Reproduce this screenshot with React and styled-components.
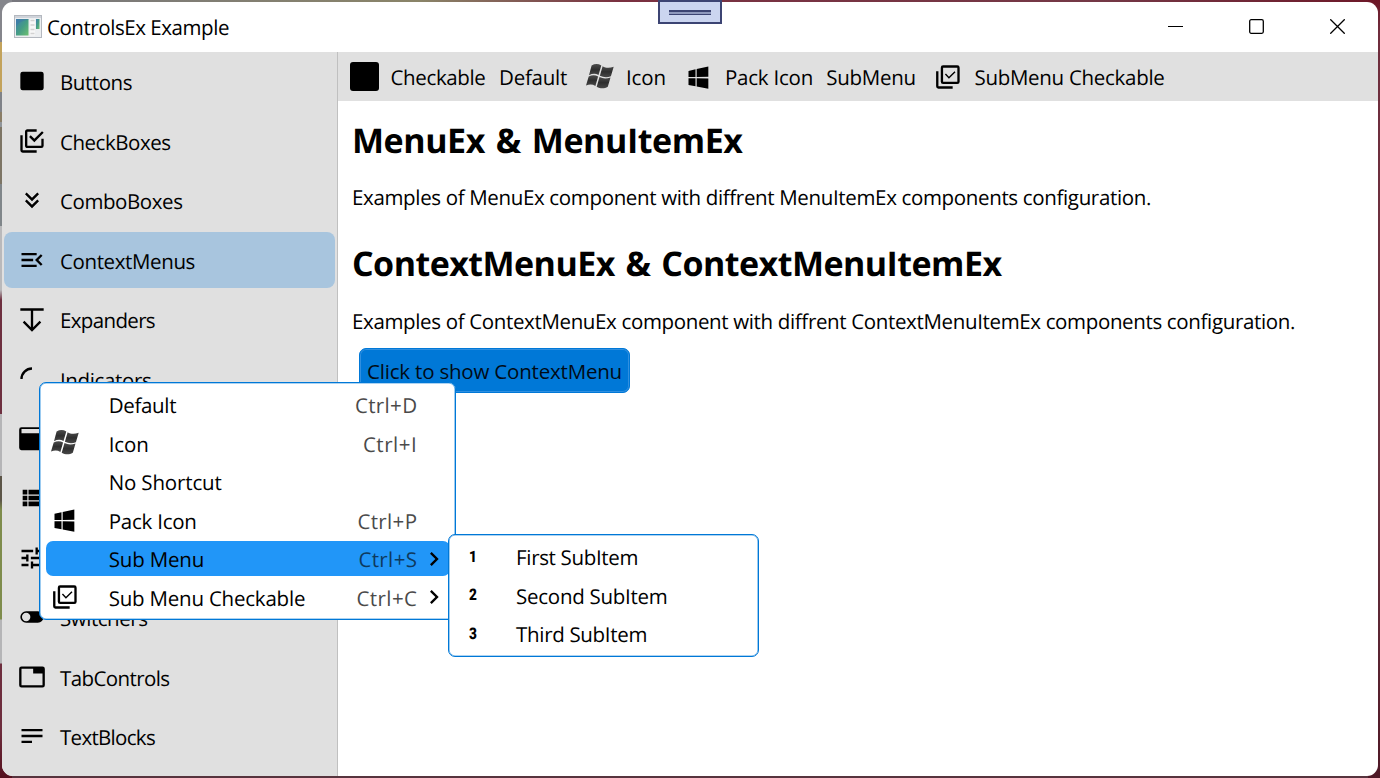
import React, { useLayoutEffect, useRef, useState } from "react";
import styled, { createGlobalStyle } from "styled-components";

const GlobalStyle = createGlobalStyle`
  * { box-sizing: border-box; }
  html, body { margin: 0; padding: 0; overflow: hidden; }
  body {
    font-family: "Open Sans", "Noto Sans", sans-serif;
    font-size: 20.5px;
    color: #000;
    text-rendering: geometricPrecision;
  }
`;

const Desktop = styled.div`
  position: relative;
  width: 1380px;
  height: 778px;
  padding: 2px;
  background:
    linear-gradient(180deg, #85868c 0 42px, #c3a35c 42px 92px, #7f8288 92px 112px, #8a7d66 112px 122px, #8f9499 122px 127px, #7d7565 127px 184px, #80868a 184px 226px, #b9b9bb 226px 290px, #6e3040 300px 414px, #b5b5b7 414px 476px, #5c5548 476px 500px, #7e8c4c 510px 619px, #b5b5b7 620px 663px, #6e2e3e 664px 730px, #55101e 100%) left / 12px 100% no-repeat,
    linear-gradient(180deg, #6d1626, #6f2c3c 30px, #6a3542 60%, #4f1826) right / 12px 100% no-repeat,
    linear-gradient(90deg, #77777f, #8a8468 420px, #7a3040 620px, #743846 1100px, #6d1828) top / 100% 12px no-repeat,
    #57343e;
`;

const Window = styled.div`
  width: 1376px;
  height: 774px;
  border-radius: 11px;
  overflow: hidden;
  background: #fff;
  display: flex;
  flex-direction: column;
`;

const TitleBar = styled.header`
  height: 50px;
  flex: none;
  display: flex;
  align-items: center;
  padding-left: 12px;
`;

const Title = styled.div`
  margin-left: 5px;
  flex: 1;
  line-height: 28px;
  padding-top: 2px;
`;

const CaptionButton = styled.button`
  width: 81px;
  height: 50px;
  border: 0;
  padding: 0 0 1px;
  background: none;
  display: grid;
  place-items: center;
`;

const Body = styled.div`
  flex: 1;
  display: flex;
  min-height: 0;
`;

const Sidebar = styled.nav`
  width: 336px;
  flex: none;
  background: #e0e0e0;
  border-right: 1px solid #c0c0c0;
  padding: 1.4px 2px 0;
  display: flex;
  flex-direction: column;
  gap: 3.55px;
`;

const NavItem = styled.a`
  height: 56px;
  flex: none;
  width: 331px;
  border-radius: 8px;
  display: flex;
  align-items: center;
  padding-left: 13.5px;
  background: ${(p) => (p.$selected ? "#a8c5de" : "transparent")};
`;

const NavLabel = styled.span`
  margin-left: 14.5px;
  padding-top: 3.4px;
  line-height: 28px;
`;

const Content = styled.main`
  flex: 1;
  min-width: 0;
`;

const MenuBar = styled.div`
  height: 49px;
  background: #e0e0e0;
  display: flex;
  align-items: center;
  padding-left: 11.5px;
`;

const Swatch = styled.span`
  width: 29px;
  height: 29px;
  border-radius: 3px;
  background: #000;
`;

const MenuBarItem = styled.span`
  display: flex;
  align-items: center;
  height: 49px;
  width: ${(p) => p.$width}px;
  flex: none;
`;

const MenuBarLabel = styled.span`
  margin-left: ${(p) => p.$gap || 0}px;
  padding-top: 2px;
  line-height: 28px;
`;

const Page = styled.section`
  padding: 15px 0 0 14px;
`;

const Heading = styled.h1`
  margin: 0;
  font-size: 34px;
  font-weight: 700;
  line-height: 48px;
  word-spacing: 2.5px;
`;

const Paragraph = styled.p`
  margin: ${(p) => p.$margin};
  line-height: 28px;
`;

const ShowButton = styled.button`
  width: 271px;
  height: 45px;
  margin-left: 7px;
  padding: 0 0 0 7px;
  display: block;
  text-align: left;
  font: inherit;
  color: #000b16;
  border: 1px solid #0078d7;
  border-radius: 7px;
  background: #0078d7;
  box-shadow: inset 0 0 0 1px #2f8fe0;
`;

const Popup = styled.div`
  position: absolute;
  left: ${(p) => p.$left}px;
  top: ${(p) => p.$top}px;
  width: ${(p) => p.$width}px;
  height: ${(p) => p.$height}px;
  background: #fff;
  border: 1px solid #0078d7;
  border-radius: 7px;
  box-shadow: inset 0 0 0 0.6px #5aa8e6;
  padding: ${(p) => p.$padding};
  display: flex;
  flex-direction: column;
  gap: 3.5px;
`;

const PopupItem = styled.div`
  height: 35px;
  flex: none;
  border-radius: 7px;
  display: flex;
  align-items: center;
  background: ${(p) => (p.$active ? "#2196f8" : "transparent")};
`;

const PopupIcon = styled.span`
  width: ${(p) => p.$width}px;
  padding-left: ${(p) => p.$inset}px;
  flex: none;
  display: flex;
  align-items: center;
`;

const PopupLabel = styled.span`
  flex: 1;
  padding-top: 2.8px;
  line-height: 28px;
`;

const Shortcut = styled.span`
  color: ${(p) => (p.$active ? "#0e3a5e" : "#4a4a4a")};
  padding-top: 2.8px;
  line-height: 28px;
`;

const Arrow = styled.span`
  width: 29.5px;
  height: 28px;
  margin-left: 3px;
  flex: none;
`;

const Digit = styled.span`
  font: 900 16px/28px Roboto, sans-serif;
  width: 28px;
  padding-top: 0.6px;
  text-align: center;
  transform: scaleX(0.85);
`;

const Grip = styled.div`
  position: absolute;
  left: 658px;
  top: 0;
  width: 64px;
  height: 24px;
  border: 2px solid #3c4473;
  background: #cbd5f0;
  display: grid;
  place-items: center;
`;

const GripLines = styled.span`
  width: 42px;
  height: 5px;
  margin-top: 1px;
  background: #8f99bd;
  border-top: 2px solid #3c4473;
  border-bottom: 1px solid #3c4473;
`;

const Run = styled.span`
  display: inline-block;
  white-space: pre;
`;

/* A run of text tracked so that its advance equals `width`. */
function Tracked({ width, children }) {
  const ref = useRef(null);
  const [spacing, setSpacing] = useState(0);
  useLayoutEffect(() => {
    const natural = ref.current.getBoundingClientRect().width;
    setSpacing((width - natural) / children.length);
  }, []);
  return (
    <Run ref={ref} style={{ letterSpacing: `${spacing}px` }}>
      {children}
    </Run>
  );
}

const paths = {
  button: "M4,4H20A2,2 0 0,1 22,6V18A2,2 0 0,1 20,20H4A2,2 0 0,1 2,18V6A2,2 0 0,1 4,4Z",
  checks: "M20,16V10H22V16A2,2 0 0,1 20,18H8C6.89,18 6,17.1 6,16V4C6,2.89 6.89,2 8,2H16V4H8V16H20M10.91,7.08L14,10.17L20.59,3.58L22,5L14,13L9.5,8.5L10.91,7.08M16,20V22H4A2,2 0 0,1 2,20V7H4V20H16Z",
  combo: "M16.59,5.59L18,7L12,13L6,7L7.41,5.59L12,10.17L16.59,5.59M16.59,11.59L18,13L12,19L6,13L7.41,11.59L12,16.17L16.59,11.59Z",
  menuOpen: "M21,15.61L19.59,17L14.58,12L19.59,7L21,8.39L17.44,12L21,15.61M3,6H16V8H3V6M3,13V11H13V13H3M3,18V16H16V18H3Z",
  expand: "M22,4V2H2V4H11V18.17L5.5,12.67L4.08,14.08L12,22L19.92,14.08L18.5,12.67L13,18.17V4H22Z",
  loading: "M12,4V2A10,10 0 0,0 2,12H4A8,8 0 0,1 12,4Z",
  window: "M3,2H21A2,2 0 0,1 23,4V19.6A2,2 0 0,1 21,21.6H3A2,2 0 0,1 1,19.6V4A2,2 0 0,1 3,2M3,3.4V7H21V3.4Z",
  list: "M9,5V9H21V5M9,19H21V15H9M9,14H21V10H9M4,9H8V5H4M4,19H8V15H4M4,14H8V10H4V14Z",
  tune: "M3,17V19H9V17H3M3,5V7H13V5H3M13,21V19H21V17H13V15H11V21H13M7,9V11H3V13H7V15H9V9H7M21,13V11H11V13H21M15,9H17V7H21V5H17V3H15V9Z",
  toggle: "M17,7H7A5,5 0 0,0 2,12A5,5 0 0,0 7,17H17A5,5 0 0,0 22,12A5,5 0 0,0 17,7M7,15.6A3.6,3.6 0 0,1 3.4,12A3.6,3.6 0 0,1 7,8.4A3.6,3.6 0 0,1 10.6,12A3.6,3.6 0 0,1 7,15.6Z",
  tab: "M21,3H3A2,2 0 0,0 1,5V19A2,2 0 0,0 3,21H21A2,2 0 0,0 23,19V5A2,2 0 0,0 21,3M21,19H3V5H13V9H21V19Z",
  text: "M21,6V8H3V6H21M3,18H12V16H3V18M3,13H21V11H3V13Z",
  windows: "M3,12V6.75L9,5.43V11.91L3,12M20,3V11.75L10,11.9V5.21L20,3M3,13L9,13.09V19.9L3,18.75V13M20,13.25V22L10,20.09V13.1L20,13.25Z",
  chevron: "M8.59,16.58L13.17,12L8.59,7.41L10,6L16,12L10,18L8.59,16.58Z",
};

const IconSvg = styled.svg`
  width: 28px;
  height: 28px;
  flex: none;
  display: block;
`;

const Icon = ({ name }) => (
  <IconSvg viewBox="0 0 24 24">
    <path d={paths[name]} fillRule="evenodd" />
  </IconSvg>
);

const CheckStack = () => (
  <IconSvg viewBox="0 0 24 24" fill="none" stroke="#000">
    <rect x="6.8" y="3" width="14.2" height="14" rx="1" strokeWidth="2" />
    <path d="M2.8,7V20A1,1 0 0,0 3.8,21H16" strokeWidth="2" />
    <path d="M9.8,9.4L12.8,12.6L18,7.4" strokeWidth="1.2" />
  </IconSvg>
);

const Flag = () => (
  <IconSvg viewBox="0 0 28 28">
    <defs>
      <linearGradient id="flag" x1="0" y1="0" x2="0" y2="1">
        <stop offset="0" stopColor="#4c4c4c" />
        <stop offset="0.5" stopColor="#2e2e2e" />
        <stop offset="1" stopColor="#484848" />
      </linearGradient>
    </defs>
    <g fill="url(#flag)" transform="translate(0.4 -0.9)">
      <path d="M5.2,3.4C8.4,1.5 11.8,1.4 14.9,3.4L12.1,13C9,11.2 6,11.4 2.6,13.2Z" />
      <path d="M16.2,4.2C19.6,6.2 23.4,6 27.3,4.7L24.5,14.2C21,15.6 17,15.4 13.5,13.7Z" />
      <path d="M2.3,14.4C5.6,12.7 8.8,12.7 11.7,14.4L9,23.8C6,22 3,22 -0.4,23.5Z" />
      <path d="M13.1,15C16.6,16.8 20.2,16.8 24.1,15.4L21.4,24.6C17.8,26.8 13.9,26.6 10.3,24.6Z" />
    </g>
  </IconSvg>
);

const AppIcon = () => (
  <svg width="28" height="24" viewBox="0 0 28 24">
    <defs>
      <linearGradient id="app" x1="0" y1="0" x2="1" y2="1">
        <stop offset="0" stopColor="#3f7fae" />
        <stop offset="0.5" stopColor="#459c86" />
        <stop offset="1" stopColor="#6cc070" />
      </linearGradient>
    </defs>
    <g transform="translate(0 -1)">
      <rect x="0.5" y="1.5" width="27" height="22" fill="#eceef0" stroke="#b4b8bf" />
      <rect x="1" y="2" width="26" height="2" fill="#cfd3da" />
      <rect x="2" y="5" width="12.5" height="16.5" fill="url(#app)" />
      <path d="M2,12.5C5,8 9,6.5 14.5,5.5V5H2Z" fill="#3b73a8" opacity="0.45" />
      <rect x="16" y="5" width="5" height="16.5" fill="#f7f7f7" />
      <path d="M16.5,6.5H20.5M16.5,11H20.5M16.5,15.5H20.5M16.5,19.5H20.5" stroke="#d2d2d2" strokeWidth="1.6" />
      <rect x="22" y="5" width="3.5" height="10" fill="url(#app)" />
    </g>
  </svg>
);

const nav = [
  { icon: "button", label: "Buttons", w: 72 },
  { icon: "checks", label: "CheckBoxes", w: 110.5 },
  { icon: "combo", label: "ComboBoxes", w: 122.5 },
  { icon: "menuOpen", label: "ContextMenus", w: 135, selected: true },
  { icon: "expand", label: "Expanders", w: 95 },
  { icon: "loading", label: "Indicators", w: 91.5 },
  { icon: "window" },
  { icon: "list" },
  { icon: "tune" },
  { icon: "toggle", label: "Switchers", w: 87.5 },
  { icon: "tab", label: "TabControls", w: 109.5 },
  { icon: "text", label: "TextBlocks", w: 95 },
];

const menu = [
  { label: "Default", w: 67.5, keys: "Ctrl+D", kw: 62.5 },
  { label: "Icon", w: 40, keys: "Ctrl+I", kw: 54.5, icon: <Flag /> },
  { label: "No Shortcut", w: 113, keys: "" },
  { label: "Pack Icon", w: 88, keys: "Ctrl+P", kw: 60 },
  { label: "Sub Menu", w: 95.5, keys: "Ctrl+S", kw: 59, active: true, arrow: true },
  { label: "Sub Menu Checkable", w: 196.5, keys: "Ctrl+C", kw: 61, icon: <CheckStack />, arrow: true },
];
menu[3].icon = <Icon name="windows" />;

const subMenu = [
  ["1", "First SubItem", 122],
  ["2", "Second SubItem", 151.5],
  ["3", "Third SubItem", 131],
];

export default function App() {
  return (
    <Desktop>
      <GlobalStyle />
      <Window>
        <TitleBar>
          <AppIcon />
          <Title><Tracked width={182}>ControlsEx Example</Tracked></Title>
          <CaptionButton>
            <svg width="15" height="15"><path d="M0,7.5H15" stroke="#000" /></svg>
          </CaptionButton>
          <CaptionButton>
            <svg width="15" height="15" fill="none" stroke="#000" strokeWidth="1.3">
              <rect x="0.7" y="0.7" width="13.6" height="13.6" rx="1.5" />
            </svg>
          </CaptionButton>
          <CaptionButton>
            <svg width="15" height="15" stroke="#000" strokeWidth="1.3"><path d="M0.3,0.3L14.7,14.7M14.7,0.3L0.3,14.7" /></svg>
          </CaptionButton>
        </TitleBar>
        <Body>
          <Sidebar>
            {nav.map(({ icon, label, w, selected }) => (
              <NavItem key={icon} $selected={selected}>
                <Icon name={icon} />
                {label && <NavLabel><Tracked width={w}>{label}</Tracked></NavLabel>}
              </NavItem>
            ))}
          </Sidebar>
          <Content>
            <MenuBar>
              <MenuBarItem $width={149.5}>
                <Swatch />
                <MenuBarLabel $gap={12}><Tracked width={95}>Checkable</Tracked></MenuBarLabel>
              </MenuBarItem>
              <MenuBarItem $width={87}>
                <MenuBarLabel><Tracked width={68}>Default</Tracked></MenuBarLabel>
              </MenuBarItem>
              <MenuBarItem $width={99}>
                <Flag />
                <MenuBarLabel $gap={12}><Tracked width={40}>Icon</Tracked></MenuBarLabel>
              </MenuBarItem>
              <MenuBarItem $width={141.3}>
                <Icon name="windows" />
                <MenuBarLabel $gap={12}><Tracked width={88}>Pack Icon</Tracked></MenuBarLabel>
              </MenuBarItem>
              <MenuBarItem $width={107.7}>
                <MenuBarLabel><Tracked width={89.5}>SubMenu</Tracked></MenuBarLabel>
              </MenuBarItem>
              <MenuBarItem $width={240}>
                <CheckStack />
                <MenuBarLabel $gap={12.5}><Tracked width={190}>SubMenu Checkable</Tracked></MenuBarLabel>
              </MenuBarItem>
            </MenuBar>
            <Page>
              <Heading><Tracked width={390.5}>MenuEx &amp; MenuItemEx</Tracked></Heading>
              <Paragraph $margin="20px 0 27px">
                <Tracked width={799}>Examples of MenuEx component with diffrent MenuItemEx components configuration.</Tracked>
              </Paragraph>
              <Heading><Tracked width={649.5}>ContextMenuEx &amp; ContextMenuItemEx</Tracked></Heading>
              <Paragraph $margin="21px 0 12px">
                <Tracked width={943}>Examples of ContextMenuEx component with diffrent ContextMenuItemEx components configuration.</Tracked>
              </Paragraph>
              <ShowButton><Tracked width={255}>Click to show ContextMenu</Tracked></ShowButton>
            </Page>
          </Content>
        </Body>
      </Window>

      <Grip><GripLines /></Grip>

      <Popup $left={39.4} $top={382.4} $width={417} $height={237.4} $padding="3.8px 5.5px">
        {menu.map((m) => (
          <PopupItem key={m.label} $active={m.active}>
            <PopupIcon $width={62.8} $inset={5}>{m.icon}</PopupIcon>
            <PopupLabel><Tracked width={m.w}>{m.label}</Tracked></PopupLabel>
            {m.keys && <Shortcut $active={m.active}><Tracked width={m.kw}>{m.keys}</Tracked></Shortcut>}
            <Arrow>{m.arrow && <Icon name="chevron" />}</Arrow>
          </PopupItem>
        ))}
      </Popup>

      <Popup $left={448.4} $top={534.2} $width={310.4} $height={122.4} $padding="4px 5.5px">
        {subMenu.map(([n, label, w]) => (
          <PopupItem key={n}>
            <PopupIcon $width={61.2} $inset={4}><Digit>{n}</Digit></PopupIcon>
            <PopupLabel><Tracked width={w}>{label}</Tracked></PopupLabel>
          </PopupItem>
        ))}
      </Popup>
    </Desktop>
  );
}
